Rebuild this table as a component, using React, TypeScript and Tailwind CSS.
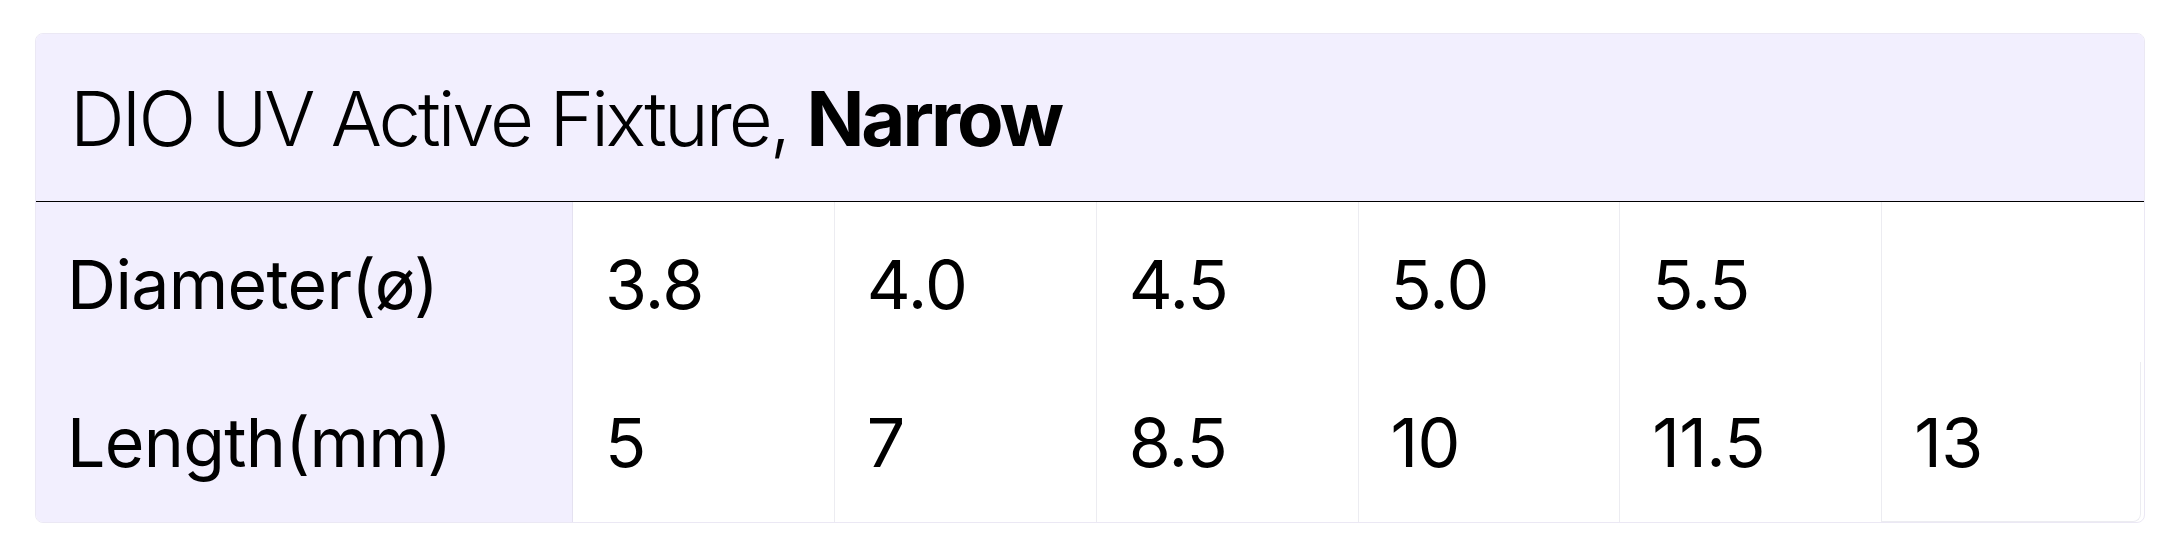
import React from 'react'

const diameters = ['3.8', '4.0', '4.5', '5.0', '5.5', '']
const lengths = ['5', '7', '8.5', '10', '11.5', '13']

export default function App() {
  return (
    <div
      className="min-h-screen bg-white pt-[33px] pr-[34px] pl-[35px] pb-5 text-black"
      style={{ fontFamily: 'Inter, "Noto Sans", sans-serif' }}
    >
      <div className="overflow-hidden rounded-lg border border-[#ebe8f4] bg-white">
        {/* Header */}
        <div className="flex h-[168px] items-center border-b border-black bg-[#f2effe] px-[34px]">
          <h2 className="text-[76px] leading-none font-light tracking-[-0.04em] whitespace-nowrap">
            DIO UV Active Fixture, <span className="font-bold">Narrow</span>
          </h2>
        </div>

        {/* Body */}
        <div className="grid grid-cols-[537px_repeat(6,1fr)] text-[68px] leading-none tracking-[-0.01em]">
          <div className="flex h-[160px] items-center border-r border-[#e4e1f0] bg-[#f2effe] px-[31px] pt-1">Diameter(ø)</div>
          {diameters.map((d, idx) => (
            <div
              key={idx}
              className={`flex h-[160px] items-center px-8 pt-1 ${idx < diameters.length - 1 ? 'border-r border-[#ececf1]' : ''}`}
            >
              {d}
            </div>
          ))}

          <div className="flex h-[160px] items-center border-r border-[#e4e1f0] bg-[#f2effe] px-[31px]">Length(mm)</div>
          {lengths.map((l, idx) =>
            idx < lengths.length - 1 ? (
              <div key={idx} className="flex h-[160px] items-center border-r border-[#ececf1] px-8">
                {l}
              </div>
            ) : (
              <div key={idx} className="h-[160px] pr-[3px]">
                <div className="flex h-full items-center rounded-br-lg border-r border-b border-[#ececf1] px-8">{l}</div>
              </div>
            )
          )}
        </div>
      </div>
    </div>
  )
}
